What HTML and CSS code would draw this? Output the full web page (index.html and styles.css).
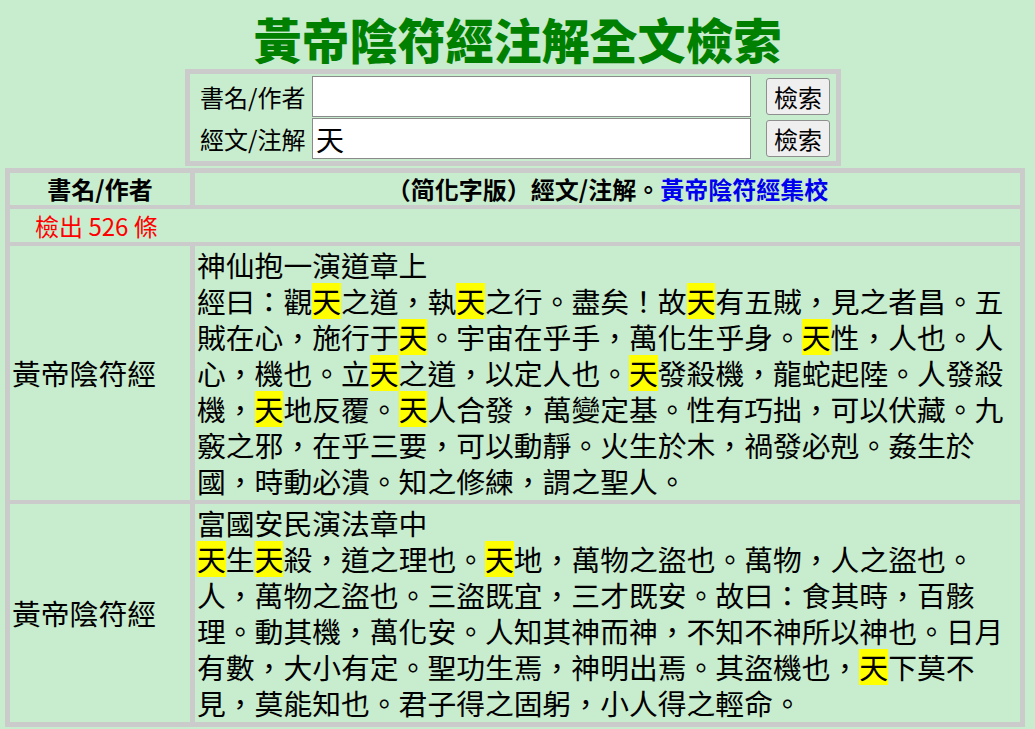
FILE: index.html
```html
<!DOCTYPE html>
<html lang="zh-Hant">
<head>
<meta charset="utf-8">
<title>黃帝陰符經注解全文檢索</title>
<link rel="stylesheet" href="styles.css">
</head>
<body>
<div class="title">黃帝陰符經注解全文檢索</div>
<form class="search">
  <label class="lbl">書名/作者</label>
  <input class="inp" type="text" value="">
  <button class="btn" type="button">檢索</button>
  <label class="lbl">經文/注解</label>
  <input class="inp" type="text" value="天">
  <button class="btn" type="button">檢索</button>
</form>
<table class="results">
  <tr class="head">
    <th class="c1">書名/作者</th>
    <th class="c2">（简化字版）經文/注解。<a class="link" href="#">黃帝陰符經集校</a></th>
  </tr>
  <tr>
    <td class="count" colspan="2">檢出 526 條</td>
  </tr>
  <tr class="row">
    <td class="book">黃帝陰符經</td>
    <td class="text">神仙抱一演道章上<br>經曰：觀<span class="hl">天</span>之道，執<span class="hl">天</span>之行。盡矣！故<span class="hl">天</span>有五賊，見之者昌。五賊在心，施行于<span class="hl">天</span>。宇宙在乎手，萬化生乎身。<span class="hl">天</span>性，人也。人心，機也。立<span class="hl">天</span>之道，以定人也。<span class="hl">天</span>發殺機，龍蛇起陸。人發殺機，<span class="hl">天</span>地反覆。<span class="hl">天</span>人合發，萬變定基。性有巧拙，可以伏藏。九竅之邪，在乎三要，可以動靜。火生於木，禍發必剋。姦生於國，時動必潰。知之修練，謂之聖人。</td>
  </tr>
  <tr class="row">
    <td class="book">黃帝陰符經</td>
    <td class="text">富國安民演法章中<br><span class="hl">天</span>生<span class="hl">天</span>殺，道之理也。<span class="hl">天</span>地，萬物之盜也。萬物，人之盜也。人，萬物之盜也。三盜既宜，三才既安。故曰：食其時，百骸理。動其機，萬化安。人知其神而神，不知不神所以神也。日月有數，大小有定。聖功生焉，神明出焉。其盜機也，<span class="hl">天</span>下莫不見，莫能知也。君子得之固躬，小人得之輕命。</td>
  </tr>
</table>
</body>
</html>
```
FILE: styles.css
```css
html, body {
  background: #c8ecce;
}
body {
  margin: 0 5px;
  font-family: "Noto Sans CJK JP", "Noto Sans CJK TC", sans-serif;
  color: #000;
}
.title {
  margin: 8px 0 1px;
  line-height: 60px;
  font-size: 48px;
  font-weight: 900;
  color: #008000;
  text-align: center;
}
.search {
  width: 630px;
  margin: 0 0 0 180px;
  box-sizing: content-box;
  border: 5px solid #cbcbcb;
  padding: 2px 6px 2px 10px;
  display: grid;
  grid-template-columns: 105px 439px 72px;
  grid-auto-rows: 41px;
  column-gap: 7px;
  row-gap: 1px;
  align-items: center;
}
.lbl {
  font-size: 24px;
  line-height: 30px;
  white-space: nowrap;
}
.inp {
  box-sizing: border-box;
  width: 439px;
  height: 41px;
  margin: 0;
  padding: 0 3px;
  border: 1px solid #8a8a8a;
  background: #fff;
  font-family: "Noto Sans CJK JP", "Noto Sans CJK TC", sans-serif;
  font-size: 28px;
  color: #000;
  align-self: stretch;
}
.btn {
  justify-self: end;
  box-sizing: border-box;
  width: 64px;
  height: 37px;
  margin: 0;
  padding: 0;
  border: 1px solid #8f8f8f;
  border-radius: 3px;
  background: #efefef;
  font-family: "Noto Sans CJK JP", "Noto Sans CJK TC", sans-serif;
  font-size: 24px;
  line-height: 35px;
  color: #000;
}
.results {
  width: 1020px;
  margin-top: 2px;
  border-collapse: separate;
  border-spacing: 5px 4px;
  border-top: 1px solid #cbcbcb;
  border-bottom: 1px solid #cbcbcb;
  background: #cbcbcb;
}
.results th, .results td {
  background: #c8ecce;
  padding: 1px 2px;
}
.head th {
  font-size: 24px;
  line-height: 30px;
  font-weight: 700;
  text-align: center;
}
.c1 {
  width: 176px;
}
.link {
  color: #0000ee;
  text-decoration: none;
}
.count {
  font-size: 24px;
  line-height: 31px;
  color: #ff0000;
  padding-left: 25px !important;
}
.book {
  font-size: 28.8px;
  line-height: 36px;
  vertical-align: middle;
  white-space: nowrap;
}
.text {
  font-size: 28.8px;
  line-height: 36px;
  vertical-align: top;
}
.hl {
  display: inline-block;
  background: #ffff00;
  line-height: 36px;
}
```
